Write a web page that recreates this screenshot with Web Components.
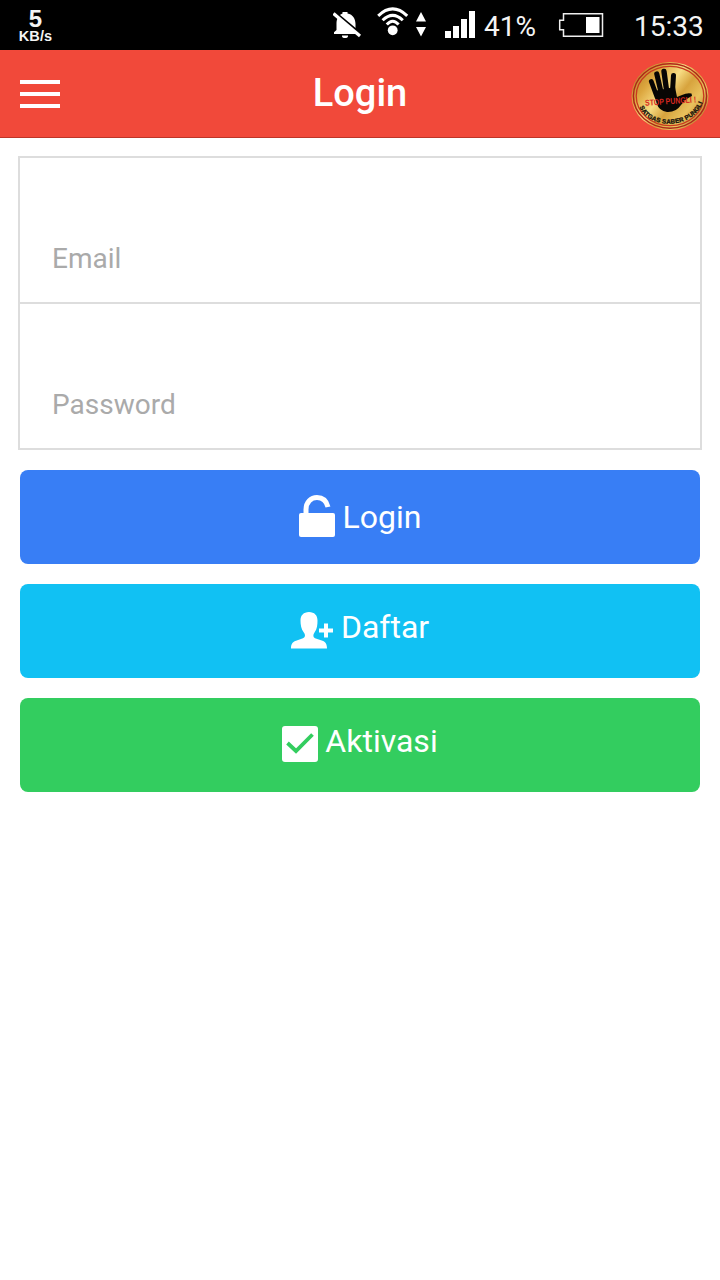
<!DOCTYPE html>
<html lang="id">
<head>
<meta charset="utf-8">
<meta name="viewport" content="width=device-width, initial-scale=1">
<title>Login</title>
<style>
html,body{margin:0;height:100%;background:#fff;font-family:Roboto,"Liberation Sans",sans-serif}
</style>
</head>
<body>
<login-page></login-page>
<script>
const define = (name, html) => {
  const t = document.createElement('template');
  t.innerHTML = html;
  customElements.define(name, class extends HTMLElement {
    constructor() {
      super();
      this.attachShadow({mode: 'open'}).append(t.content.cloneNode(true));
    }
  });
};

define('status-bar', `
<style>
:host{display:flex;height:50px;background:#000;color:#f4f4f4;box-sizing:border-box;padding:0 15px 0 18px;font-size:28px}
svg{display:block;flex:none;fill:#fff}
.speed{width:35px;font-family:"Liberation Sans",sans-serif;font-weight:700;text-align:center;padding-top:8px}
.speed b{display:block;font-size:24px;line-height:21px}
.speed span{display:block;font-size:14.5px;line-height:15px;letter-spacing:.1px}
.space{flex:1}
.t{line-height:54px;white-space:nowrap}
.pct{width:53px;margin-left:9px}
.time{width:71px;margin-left:30px}
</style>
<div class="speed"><b>5</b><span>KB/s</span></div>
<div class="space"></div>
<svg width="30" height="50" viewBox="1 0 30 50"><path d="M10.500 13.500V12h5v1.500C21 14.500 23.500 19 23.500 24v7.500l3 2.500H2v-1.800l2.500-2.200V23c0-3.800 2-8 6-9.500z"/><path d="M10 35.500h6v.5q0 2-3 2t-3-2z"/><path d="M2 11.800 29 34.500" stroke="#000" stroke-width="3"/><path d="M1.500 13.500 28 36" stroke="#fff" stroke-width="3.200"/></svg>
<svg width="32" height="50" viewBox="0 0 32 50" style="margin-left:14px"><circle cx="15.700" cy="30.300" r="4.900"/><g fill="none" stroke="#fff" stroke-width="3"><path d="M1.200 15.800Q15.700 1.900 30.200 15.800"/><path d="M5.600 20.300Q15.700 10.300 25.800 20.300"/><path d="M9.800 24.600Q15.700 18 21.600 24.600"/></g></svg>
<svg width="12" height="50" viewBox="0 0 12 50" style="margin-left:6px"><path d="M1 21.500 6 12l5 9.500zM1 27h10l-5 9.500z"/></svg>
<svg width="30" height="50" viewBox="0 0 30 50" style="margin-left:18px"><path d="M0 31h6v7H0zM8 26h6v12H8zM16 19h6v19h-6zM24 11h6v27h-6z"/></svg>
<div class="t pct">41%</div>
<svg width="46" height="50" viewBox="0 0 46 50" style="margin-left:21px"><path d="M5.500 13.700h39V36.300H5.500V29.700H1.700V20.300H5.500z" fill="none" stroke="#eee" stroke-width="1.500"/><path d="M28 17h13.500v16H28z"/></svg>
<div class="t time">15:33</div>`);

define('pungli-badge', `
<style>:host{display:block;width:78px;height:70px}svg{display:block}</style>
<svg width="78" height="70" viewBox="0 0 78 70">
<defs><linearGradient id="g" x1="0" y1=".15" x2="1" y2=".85"><stop offset="0" stop-color="#b47b24"/><stop offset=".22" stop-color="#dca63e"/><stop offset=".42" stop-color="#f7dc83"/><stop offset=".58" stop-color="#d7a33d"/><stop offset=".75" stop-color="#e9c25d"/><stop offset="1" stop-color="#b17720"/></linearGradient>
<path id="arc" d="M8.500 46C17 68 60 70 71.500 42"/></defs>
<ellipse cx="39" cy="35" rx="38.500" ry="34" fill="url(#g)"/>
<ellipse cx="39" cy="35" rx="36.600" ry="32.200" fill="none" stroke="#ad271a" stroke-width="1.500"/>
<ellipse cx="39" cy="35" rx="33.800" ry="29.600" fill="none" stroke="#c8391f" stroke-width="1.300"/>
<g stroke="#080604" stroke-linecap="round" fill="none"><path d="M26 36 20.300 20.500" stroke-width="4.800"/><path d="M30 31 25.800 13" stroke-width="5.200"/><path d="M35.500 29 33 10.500" stroke-width="5.400"/><path d="M41.500 30 42.500 14.500" stroke-width="5"/></g>
<path d="M23 30 44 26 46 36 51 34Q56 31.500 60.500 32.500L61 35Q55 37.500 50 44 45 51.500 36 51 28 50 25.500 42z" fill="#080604"/>
<text x="14" y="43" textLength="51" lengthAdjust="spacingAndGlyphs" font-family="Liberation Sans, sans-serif" font-size="8.500" font-weight="700" fill="#d72720" transform="rotate(-4 40 39)">STOP PUNGLI !</text>
<text font-family="Liberation Sans, sans-serif" font-size="6.300" font-weight="700" fill="#15100a" stroke="#15100a" stroke-width=".3"><textPath href="#arc" textLength="78" lengthAdjust="spacing">SATGAS SABER PUNGLI</textPath></text>
</svg>`);

define('app-header', `
<style>
:host{display:grid;grid-template-columns:78px 1fr 78px;align-items:center;height:88px;box-sizing:border-box;padding:0 11px 0 11px;background:#f1493a;border-bottom:1px solid #bd3528;color:#fff}
.menu{display:grid;gap:8px;width:40px;margin-left:9px;padding-top:1px}
.menu i{height:4px;background:#fff}
h1{margin:0;text-align:center;font-size:38px;font-weight:500;line-height:44px;padding-bottom:2px}
pungli-badge{margin-top:5px}
</style>
<div class="menu"><i></i><i></i><i></i></div>
<h1><slot></slot></h1>
<pungli-badge></pungli-badge>`);

define('form-field', `
<style>
:host{display:flex;align-items:flex-end;height:144px;box-sizing:border-box;padding:0 32px 26px;background:#fff;color:#aaa;font-size:28px;line-height:34px}
</style><slot></slot>`);

define('field-list', `
<style>
:host{display:grid;gap:2px;background:#ddd;border:2px solid #ddd;margin:0 18px}
</style><slot></slot>`);

define('action-button', `
<style>
:host{display:flex;justify-content:center;height:94px;border-radius:8px;box-sizing:border-box;background:var(--bg);color:#fff;font-size:32px;line-height:38px;padding-top:var(--top,25px)}
::slotted(svg){display:block;flex:none;fill:#fff;margin-right:var(--gap,7px);margin-top:var(--drop,0)}
</style><slot name="icon"></slot><span><slot></slot></span>`);

define('login-page', `
<style>
:host{display:flex;flex-direction:column;min-height:1280px;background:#fff}
field-list{margin-top:18px}
.actions{display:grid;gap:20px;padding:20px}
</style>
<status-bar></status-bar>
<app-header>Login</app-header>
<field-list><form-field>Email</form-field><form-field>Password</form-field></field-list>
<div class="actions">
<action-button style="--bg:#387ef5;--top:28px;--drop:-4px;--gap:8px"><svg slot="icon" width="36" height="44" viewBox="0 0 36 44"><path d="M2 19h32q2 0 2 2v20q0 2-2 2H2q-2 0-2-2V21q0-2 2-2z"/><path d="M7 20V15.500C7 8 12 3.500 18 3.500c5.500 0 9.500 3.500 11 9.500" fill="none" stroke="#fff" stroke-width="5"/></svg>Login</action-button>
<action-button style="--bg:#11c1f3;--top:24px;--drop:4px;--gap:8px"><svg slot="icon" width="42" height="37" viewBox="0 0 42 37"><path d="M18 0c5.500 0 8.500 3.500 8.500 8.500 0 4-.3 8.500-3 12-1.700 2.200-1.500 5 .5 5.800l7.500 2.500c3.500 1.500 4.500 4 4.500 7.700H0c0-4 1-6.200 5-7.700l7-2.500c2.500-1 2.500-3.600.8-5.800-2.700-3.500-3.300-8-3.300-12C9.500 3.500 12.500 0 18 0z"/><path d="M33 11.500h4v5h5v4h-5v5h-4v-5h-5v-4h5z"/></svg>Daftar</action-button>
<action-button style="--bg:#33cd5f;--top:24px;--drop:4px"><svg slot="icon" width="36" height="36" viewBox="0 0 36 36"><path d="M3 0h30q3 0 3 3v30q0 3-3 3H3q-3 0-3-3V3q0-3 3-3z"/><path d="M5.500 17 14 25 30.500 8.500" fill="none" stroke="#33cd5f" stroke-width="3.800"/></svg>Aktivasi</action-button>
</div>`);
</script>
</body>
</html>
